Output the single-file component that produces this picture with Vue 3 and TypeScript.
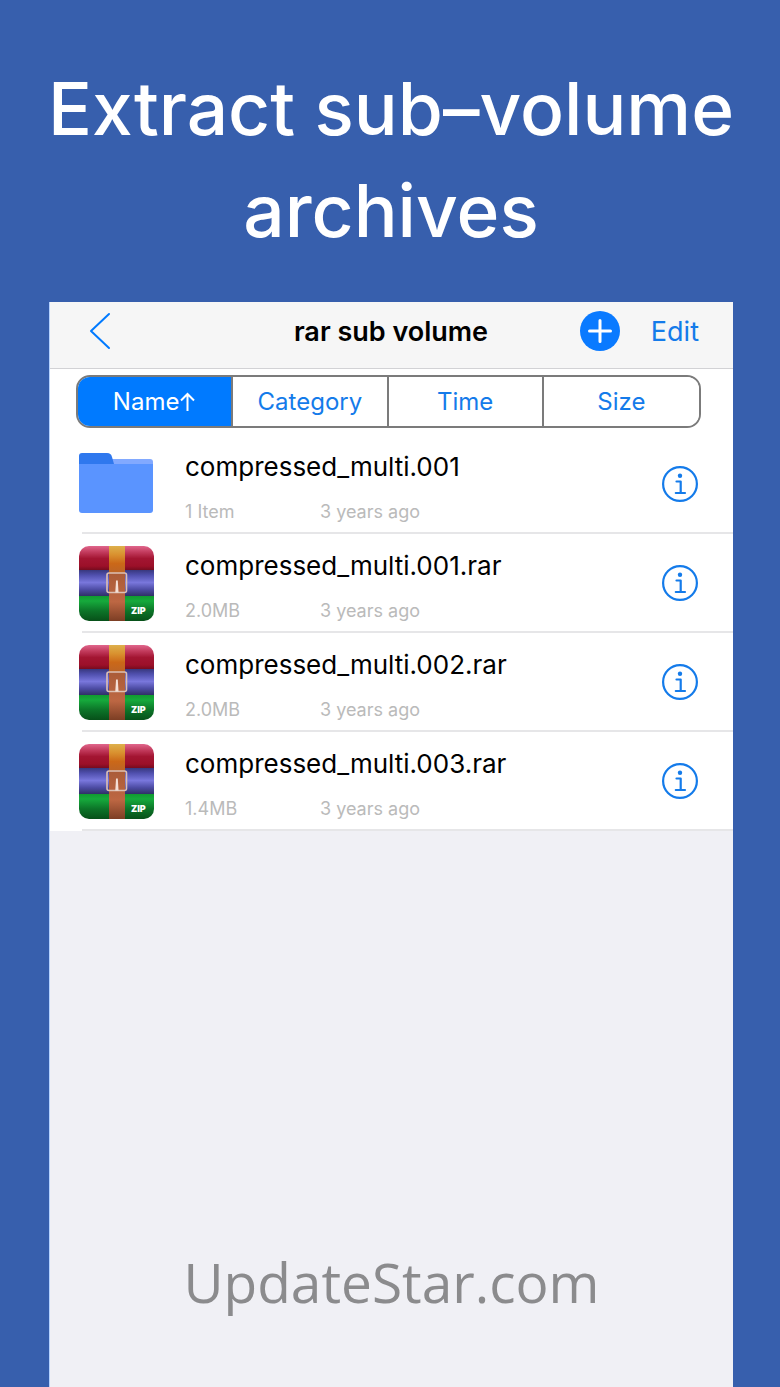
<script setup lang="ts">
import { ref } from 'vue'

interface FileEntry {
  name: string
  detail: string
  age: string
  kind: 'folder' | 'archive'
}

const sortOptions = ['Name', 'Category', 'Time', 'Size']
const activeSort = ref('Name')

const files: FileEntry[] = [
  { name: 'compressed_multi.001', detail: '1 Item', age: '3 years ago', kind: 'folder' },
  { name: 'compressed_multi.001.rar', detail: '2.0MB', age: '3 years ago', kind: 'archive' },
  { name: 'compressed_multi.002.rar', detail: '2.0MB', age: '3 years ago', kind: 'archive' },
  { name: 'compressed_multi.003.rar', detail: '1.4MB', age: '3 years ago', kind: 'archive' },
]
</script>

<template>
  <main class="page">
    <h1 class="headline">Extract sub–volume archives</h1>

    <section class="panel">
      <header class="navbar">
        <button class="nav-button back" type="button" aria-label="Back">
          <svg width="22" height="38" viewBox="0 0 22 38" fill="none">
            <path d="M20 2 L2 19 L20 36" stroke="#007aff" stroke-width="2" stroke-linecap="round" stroke-linejoin="round" />
          </svg>
        </button>
        <h2 class="title">rar sub volume</h2>
        <div class="actions">
          <button class="nav-button" type="button" aria-label="Add">
            <svg width="40" height="40" viewBox="0 0 40 40">
              <circle cx="20" cy="20" r="20" fill="#0a7aff" />
              <path d="M20 9.500V30.500M9.500 20H30.500" stroke="#fff" stroke-width="3" stroke-linecap="round" />
            </svg>
          </button>
          <button class="nav-button edit" type="button">Edit</button>
        </div>
      </header>

      <div class="content">
        <div class="segments" role="group" aria-label="Sort by">
          <button
            v-for="option in sortOptions"
            :key="option"
            type="button"
            class="segment"
            :class="{ active: option === activeSort }"
            :aria-pressed="option === activeSort"
            @click="activeSort = option"
          >{{ option }}<svg v-if="option === activeSort" class="arrow" width="17" height="20" viewBox="0 0 17 20" fill="none">
              <path d="M8.500 19V2M2 8.500L8.500 2L15 8.500" stroke="currentColor" stroke-width="2" />
            </svg></button>
        </div>

        <ul class="files">
          <li v-for="file in files" :key="file.name" class="file">
            <svg v-if="file.kind === 'folder'" class="icon" width="76" height="76" viewBox="0 0 76 76">
              <path d="M30 13H72a3 3 0 0 1 3 3V30H30Z" fill="#82a9ff" />
              <path d="M1 30V10a3 3 0 0 1 3-3H29c3 0 4 1 5 4l2 7v12Z" fill="#2f78ee" />
              <path d="M1 18H75V64a3 3 0 0 1-3 3H4a3 3 0 0 1-3-3Z" fill="#5a94ff" />
            </svg>
            <svg v-else class="icon" width="76" height="76" viewBox="0 0 76 76">
              <defs>
                <linearGradient id="red" x1="0" y1="0" x2="0" y2="1">
                  <stop offset="0" stop-color="#e0668c" />
                  <stop offset="0.25" stop-color="#c23a5c" />
                  <stop offset="0.5" stop-color="#a31532" />
                  <stop offset="0.8" stop-color="#9c1029" />
                  <stop offset="1" stop-color="#6d0a1c" />
                </linearGradient>
                <linearGradient id="blue" x1="0" y1="0" x2="0" y2="1">
                  <stop offset="0" stop-color="#38387e" />
                  <stop offset="0.2" stop-color="#5050ae" />
                  <stop offset="0.48" stop-color="#7977dc" />
                  <stop offset="0.75" stop-color="#4d4ca4" />
                  <stop offset="1" stop-color="#303066" />
                </linearGradient>
                <linearGradient id="green" x1="0" y1="0" x2="0" y2="1">
                  <stop offset="0" stop-color="#119a30" />
                  <stop offset="0.2" stop-color="#16aa3c" />
                  <stop offset="0.6" stop-color="#0c7428" />
                  <stop offset="1" stop-color="#075019" />
                </linearGradient>
                <linearGradient id="strap-top" x1="0" y1="0" x2="0" y2="1">
                  <stop offset="0" stop-color="#deb04c" />
                  <stop offset="0.3" stop-color="#d9912f" />
                  <stop offset="0.6" stop-color="#cb6818" />
                  <stop offset="1" stop-color="#b8632a" />
                </linearGradient>
                <linearGradient id="strap-bottom" x1="0" y1="0" x2="0" y2="1">
                  <stop offset="0" stop-color="#aa5c38" />
                  <stop offset="0.6" stop-color="#bd6743" />
                  <stop offset="1" stop-color="#7c3e24" />
                </linearGradient>
                <clipPath id="rounded"><rect x="1" y="1" width="75" height="75" rx="10" /></clipPath>
              </defs>
              <g clip-path="url(#rounded)">
                <rect x="1" y="1" width="75" height="25" fill="url(#red)" />
                <rect x="1" y="25" width="75" height="26" fill="url(#blue)" />
                <rect x="1" y="51" width="75" height="25" fill="url(#green)" />
                <rect x="31" y="1" width="16" height="29" fill="url(#strap-top)" />
                <rect x="31" y="28" width="16" height="48" fill="url(#strap-bottom)" />
              </g>
              <rect x="29" y="28" width="19.500" height="19.500" rx="2" fill="none" stroke="#dcc0b4" stroke-width="1.600" />
              <path d="M38 35.500H39.800L40.500 47.500H37.300Z" fill="#f4dfd5" />
              <text x="53" y="69" class="zip">ZIP</text>
            </svg>

            <div class="details">
              <div class="text">
                <span class="name">{{ file.name }}</span>
                <span class="meta"><span>{{ file.detail }}</span><span>{{ file.age }}</span></span>
              </div>
              <button class="nav-button" type="button" :aria-label="`Details for ${file.name}`">
                <svg width="36" height="36" viewBox="0 0 36 36" fill="none">
                  <circle cx="18" cy="18" r="16.900" stroke="#147bea" stroke-width="2.200" />
                  <circle cx="18" cy="9.700" r="2.200" fill="#147bea" />
                  <path d="M14.500 15.500H18.700V27M13.800 27H23" stroke="#147bea" stroke-width="2.200" stroke-linecap="round" stroke-linejoin="round" />
                </svg>
              </button>
            </div>
          </li>
        </ul>
      </div>

      <p class="watermark">UpdateStar.com</p>
    </section>
  </main>
</template>

<style>
body {
  margin: 0;
  background: #375fad;
}
</style>

<style scoped>
.page {
  display: flex;
  flex-direction: column;
  box-sizing: border-box;
  min-height: 100vh;
  padding: 58px 47px 0 49px;
  background: #375fad;
  font-family: Inter, 'Liberation Sans', sans-serif;
}

.headline {
  margin: 0 -24px 40px;
  color: #fff;
  font-size: 73px;
  font-weight: 500;
  line-height: 102px;
  text-align: center;
}

.panel {
  display: flex;
  flex: 1;
  flex-direction: column;
  border-left: 1px solid #b5d2ff;
  background: #f0f0f5;
}

.navbar {
  display: grid;
  grid-template-columns: 1fr auto 1fr;
  align-items: center;
  box-sizing: border-box;
  height: 67px;
  padding: 0 34px 8px 33px;
  border-bottom: 1px solid #d2d2d5;
  background: #f6f6f6;
}

.title {
  margin: 0;
  padding-top: 2px;
  font-size: 27px;
  font-weight: 600;
  line-height: 32px;
}

.nav-button {
  display: block;
  padding: 0;
  border: 0;
  background: none;
  color: #147bea;
  font: inherit;
  cursor: pointer;
}

.nav-button svg {
  display: block;
}

.back {
  justify-self: start;
  padding-left: 6px;
}

.actions {
  display: flex;
  align-items: center;
  justify-content: flex-end;
  gap: 31px;
}

.edit {
  padding-top: 2px;
  font-size: 27px;
  line-height: 32px;
}

.content {
  background: #fff;
}

.segments {
  display: grid;
  grid-template-columns: repeat(4, 1fr);
  box-sizing: border-box;
  height: 53px;
  margin: 6px 32px 7px 26px;
  overflow: hidden;
  border: 2px solid #7b7b7b;
  border-radius: 14px;
}

.segment {
  display: flex;
  align-items: center;
  justify-content: center;
  padding: 0;
  border: 0;
  border-right: 2px solid #7b7b7b;
  background: #fff;
  color: #147bea;
  font: inherit;
  font-size: 24px;
  cursor: pointer;
}

.segment:last-child {
  border-right: 0;
}

.segment.active {
  background: #007aff;
  color: #fff;
}

.files {
  margin: 0;
  padding: 0;
  list-style: none;
}

.file {
  display: flex;
  align-items: center;
  height: 99px;
  padding-left: 28px;
}

.icon {
  flex: none;
  margin-bottom: 2px;
}

.details {
  display: flex;
  flex: 1;
  align-items: center;
  justify-content: space-between;
  box-sizing: border-box;
  height: 100%;
  margin-left: -72px;
  padding: 0 35px 0 103px;
  border-bottom: 2px solid #e6e6e8;
}

.text {
  display: flex;
  flex-direction: column;
  gap: 18px;
  padding-top: 6px;
}

.name {
  font-size: 26px;
  line-height: 32px;
}

.meta {
  display: grid;
  grid-template-columns: 135px auto;
  color: #bababa;
  font-size: 18px;
  line-height: 22px;
}

.zip {
  fill: #fff;
  font-size: 9px;
  font-weight: 900;
}

.watermark {
  margin: auto 0 65px;
  color: #8b8b8d;
  font-family: 'Open Sans', sans-serif;
  font-size: 55px;
  line-height: 80px;
  text-align: center;
}
</style>
